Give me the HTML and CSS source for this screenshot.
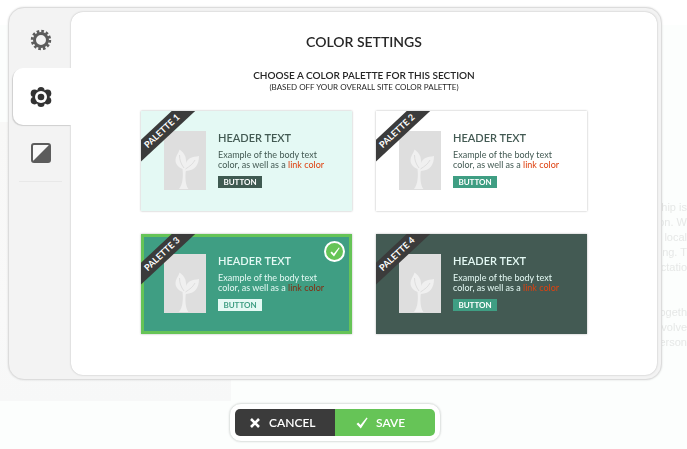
FILE: index.html
```html
<!DOCTYPE html>
<html lang="en">
<head>
	<meta charset="UTF-8">
	<title>Color Settings</title>
	<link rel="stylesheet" href="styles.css">
</head>
<body>
	<!-- shared drawings -->
	<svg class="symbols" aria-hidden="true">
		<symbol id="plant" viewBox="0 0 42 59">
			<path fill="#f0f0f0" d="M15.500 18.500C20 22 22.500 25 22 32C24 27 28 26 35 25C35 34 31 39.500 21.800 40C21 46 21.500 55 24.500 58H15C18.500 54 19.500 46 18.500 38C11 35 10.500 29 12.500 25C13.500 22.500 15 21 15.500 18.500Z"/>
			<path fill="none" stroke="#dedede" d="M15.500 24C15.500 29 17 33 20 37M31 29C29 33 26 35 21.500 38"/>
		</symbol>
		<symbol id="tick" viewBox="0 0 12 12">
			<path fill="#fff" d="M.5 7L2.200 5.500L4.500 8L10.600.6L11.600 1.200L4.800 11.400Z"/>
		</symbol>
	</svg>

	<!-- page behind the overlay -->
	<div class="page" aria-hidden="true">
		<div class="page-header"></div>
		<div class="page-body">
			<div class="page-photo"></div>
			<div class="page-copy">
				<p>hip is<br>ion. W<br>local<br>ng. T<br>ctatio</p>
				<p>ogeth<br>nvolve<br>erson</p>
			</div>
		</div>
	</div>

	<form class="overlay">
		<div class="modal">
			<nav class="tabs">
				<button type="button" class="tab" aria-label="General">
					<svg width="22" height="22" viewBox="-11 -11 22 22">
						<circle r="6.500" fill="none" stroke="#5c5c5c" stroke-width="3"/>
						<circle r="8.800" fill="none" stroke="#5c5c5c" stroke-width="2.800" stroke-dasharray="2.600 2.008"/>
					</svg>
				</button>
				<button type="button" class="tab on" aria-label="Colors">
					<svg width="22" height="22" viewBox="-11 -11 22 22">
						<g fill="#333">
							<circle cy="-6.500" r="3.600"/>
							<circle cy="6.500" r="3.600"/>
							<circle cx="6.500" cy="-3.600" r="3.800"/>
							<circle cx="6.500" cy="3.600" r="3.800"/>
							<circle cx="-6.500" cy="-3.600" r="3.800"/>
							<circle cx="-6.500" cy="3.600" r="3.800"/>
							<circle r="7.500"/>
						</g>
						<circle r="6" fill="#fff"/>
						<circle r="3.300" fill="#333"/>
					</svg>
				</button>
				<button type="button" class="tab" aria-label="Contrast">
					<svg width="20" height="20" viewBox="0 0 20 20">
						<rect x="1" y="1" width="18" height="18" rx="2" fill="#f8f8f8" stroke="#5c5c5c" stroke-width="2"/>
						<path fill="#5c5c5c" d="M18.500 1.500V18.500H1.500Z"/>
					</svg>
				</button>
			</nav>
			<div class="panel">
				<h1>COLOR SETTINGS</h1>
				<h2>CHOOSE A COLOR PALETTE FOR THIS SECTION</h2>
				<p class="note">(BASED OFF YOUR OVERALL SITE COLOR PALETTE)</p>
				<div class="palettes">
					<div class="palette mint">
						<label class="ribbon" for="p1">PALETTE 1</label>
						<svg class="thumb"><use href="#plant"/></svg>
						<div class="sample">
							<h3>HEADER TEXT</h3>
							<p>Example of the body text<br>color, as well as a <a href="#">link color</a></p>
							<button type="button">BUTTON</button>
						</div>
						<div class="pick">
							<input type="radio" name="palette" id="p1">
							<svg><use href="#tick"/></svg>
						</div>
					</div>
					<div class="palette white">
						<label class="ribbon" for="p2">PALETTE 2</label>
						<svg class="thumb"><use href="#plant"/></svg>
						<div class="sample">
							<h3>HEADER TEXT</h3>
							<p>Example of the body text<br>color, as well as a <a href="#">link color</a></p>
							<button type="button">BUTTON</button>
						</div>
						<div class="pick">
							<input type="radio" name="palette" id="p2">
							<svg><use href="#tick"/></svg>
						</div>
					</div>
					<div class="palette green selected">
						<label class="ribbon" for="p3">PALETTE 3</label>
						<svg class="thumb"><use href="#plant"/></svg>
						<div class="sample">
							<h3>HEADER TEXT</h3>
							<p>Example of the body text<br>color, as well as a <a href="#">link color</a></p>
							<button type="button">BUTTON</button>
						</div>
						<div class="pick">
							<input type="radio" name="palette" id="p3" checked>
							<svg><use href="#tick"/></svg>
						</div>
					</div>
					<div class="palette dark">
						<label class="ribbon" for="p4">PALETTE 4</label>
						<svg class="thumb"><use href="#plant"/></svg>
						<div class="sample">
							<h3>HEADER TEXT</h3>
							<p>Example of the body text<br>color, as well as a <a href="#">link color</a></p>
							<button type="button">BUTTON</button>
						</div>
						<div class="pick">
							<input type="radio" name="palette" id="p4">
							<svg><use href="#tick"/></svg>
						</div>
					</div>
				</div>
			</div>
		</div>
		<div class="actions">
			<button type="button" class="cancel">
				<svg width="10" height="10" viewBox="0 0 10 10"><path stroke="#fff" stroke-width="2.600" d="M1 1L9 9M9 1L1 9"/></svg>
				CANCEL
			</button>
			<button type="submit" class="save">
				<svg width="12" height="12"><use href="#tick"/></svg>
				SAVE
			</button>
		</div>
	</form>
</body>
</html>
```
FILE: styles.css
```css
*{
	margin: 0;
	padding: 0;
	box-sizing: border-box;
}
body{
	font-family: Lato, "Open Sans", sans-serif;
	color: #262626;
	background-color: #fcfefd;
}
button{
	border: 0;
	font-family: inherit;
	cursor: pointer;
}
.symbols{
	position: absolute;
	width: 0;
	height: 0;
}

/* page behind */
.page{
	position: fixed;
	top: 0;
	right: 0;
	bottom: 0;
	left: 0;
	overflow: hidden;
}
.page-header{
	height: 25px;
	background-color: #fff;
}
.page-body{
	display: flex;
	justify-content: space-between;
	padding-top: 97px;
}
.page-photo{
	width: 231px;
	height: 279px;
	background: linear-gradient(#f8f8f7, #f9f9f9 70%, #f7f8f8);
}
.page-copy{
	padding-top: 78px;
	font-family: "Liberation Sans", Arial, sans-serif;
	font-size: 11px;
	line-height: 15px;
	text-align: right;
	color: #e6e8e7;
}
.page-copy p{
	margin-bottom: 30px;
}

/* modal */
.overlay{
	position: relative;
	padding: 7px 25px 7px 8px;
}
.modal{
	display: flex;
	padding: 4px;
	background-color: #f3f3f3;
	border: 1px solid #dcdcdc;
	border-radius: 16px;
	box-shadow: 0 0 2px rgba(0,0,0, 0.15);
}
.tabs{
	position: relative;
	z-index: 1;
	width: 58px;
}
.tab{
	display: flex;
	align-items: center;
	width: 100%;
	height: 56px;
	padding-left: 17px;
	background: none;
}
.tab.on{
	height: 57px;
	background-color: #fff;
	border-radius: 10px 0 0 10px;
	box-shadow: -1px 1px 1px rgba(0,0,0, 0.15);
}
.tab:last-child{
	padding-left: 18px;
}
.tabs::after{
	content: "";
	display: block;
	height: 1px;
	margin: 0 9px 0 6px;
	background-color: #e8e8e8;
}
.panel{
	flex: 1;
	padding: 20px 70px 41px;
	background-color: #fff;
	border-radius: 12px;
	box-shadow: 0 0 2px rgba(0,0,0, 0.25);
	text-align: center;
}
h1{
	font-size: 14px;
	font-weight: 600;
	line-height: 20px;
}
h2{
	margin-top: 17px;
	font-size: 10px;
	font-weight: 600;
	line-height: 13px;
}
.note{
	font-size: 8px;
	line-height: 10px;
}
.palettes{
	display: grid;
	grid-template-columns: 1fr 1fr;
	gap: 23px 24px;
	margin-top: 19px;
	text-align: left;
}
.palette{
	position: relative;
	display: flex;
	gap: 12px;
	padding: 20px 23px 21px;
	overflow: hidden;
	box-shadow: 0 0 2px rgba(0,0,0, 0.3);
}
.ribbon{
	position: absolute;
	top: 12px;
	left: -19px;
	width: 80px;
	font-size: 9px;
	font-weight: bold;
	line-height: 16px;
	text-align: center;
	color: #fff;
	background-color: #3b3b3b;
	transform: rotate(-43deg);
	cursor: pointer;
}
.thumb{
	flex: none;
	width: 42px;
	height: 59px;
	background-color: #dedede;
}
.sample h3{
	font-size: 11px;
	font-weight: 600;
	line-height: 14px;
}
.sample p{
	margin-top: 5px;
	font-size: 9px;
	line-height: 10px;
	white-space: nowrap;
}
.sample a{
	text-decoration: none;
}
.sample button{
	display: block;
	width: 44px;
	margin-top: 6px;
	font-size: 8px;
	font-weight: bold;
	line-height: 12px;
}
.mint{
	color: #435a53;
	background-color: #e4f9f4;
}
.white{
	color: #435a53;
	background-color: #fff;
}
.green{
	color: #e4f9f4;
	background-color: #3f9e83;
}
.dark{
	color: #e4f9f4;
	background-color: #435a53;
}
.mint a,.white a,.dark a{
	color: #de410f;
}
.green a{
	color: #832d12;
}
.mint button{
	color: #fff;
	background-color: #3f5a51;
}
.white button,.dark button{
	color: #fff;
	background-color: #3f9e83;
}
.green button{
	color: #3f9e83;
	background-color: #e4f9f4;
}
.selected{
	box-shadow: inset 0 0 0 3px #66c457, 0 0 2px rgba(0,0,0, 0.3);
}
.pick{
	position: absolute;
	top: 7px;
	right: 7px;
	display: grid;
	place-items: center;
	width: 21px;
	height: 21px;
}
.pick input,.pick svg{
	grid-area: 1 / 1;
}
.pick input{
	appearance: none;
	width: 21px;
	height: 21px;
	border-radius: 50%;
	cursor: pointer;
}
.pick svg{
	display: none;
	width: 10px;
	height: 10px;
	pointer-events: none;
}
.pick input:checked{
	background-color: #66c457;
	border: 2px solid #fff;
}
.pick input:checked + svg{
	display: block;
	z-index: 1;
}

/* cancel / save */
.actions{
	display: flex;
	width: 212px;
	margin: 23px auto 0;
	padding: 5px;
	background-color: #fff;
	border: 1px solid #e2e6e4;
	border-radius: 12px;
	box-shadow: 0 0 2px rgba(0,0,0, 0.12);
}
.actions button{
	display: flex;
	align-items: center;
	width: 50%;
	height: 27px;
	font-size: 12px;
	font-weight: 600;
	color: #fff;
}
.cancel{
	gap: 9px;
	padding-left: 15px;
	background-color: #3b3b3b;
	border-radius: 5px 0 0 5px;
}
.save{
	gap: 8px;
	padding-left: 21px;
	background-color: #66c457;
	border-radius: 0 5px 5px 0;
}
```
